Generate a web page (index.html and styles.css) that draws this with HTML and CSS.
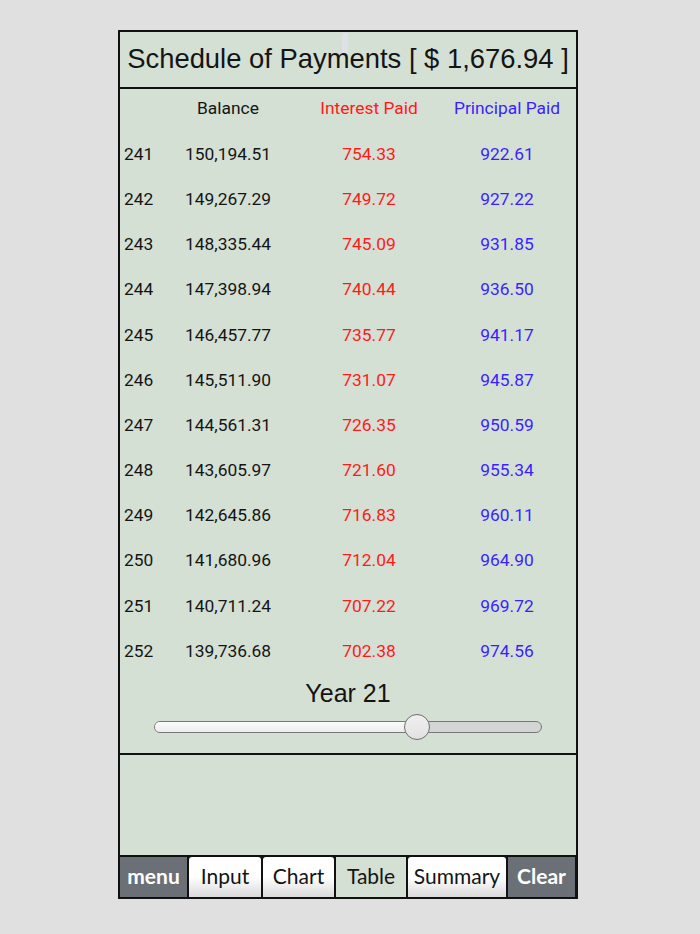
FILE: index.html
```html
<!DOCTYPE html>
<html>
<head>
  <meta charset='utf-8'>
  <title>Schedule of Payments</title>
  <meta name='viewport' content='width=device-width, initial-scale=1'>
  <link rel="stylesheet" href="styles.css">
</head>
<body>

  <div class="panel">
    <div class="title">
      Schedule of Payments [ $ 1,676.94 ]
      <span class="caret"></span>
    </div>

    <div class="schedule">
      <div class="row head">
        <span class="num"></span>
        <span class="bal">Balance</span>
        <span class="int">Interest Paid</span>
        <span class="prin">Principal Paid</span>
      </div>
      <div class="row"><span class="num">241</span><span class="bal">150,194.51</span><span class="int">754.33</span><span class="prin">922.61</span></div>
      <div class="row"><span class="num">242</span><span class="bal">149,267.29</span><span class="int">749.72</span><span class="prin">927.22</span></div>
      <div class="row"><span class="num">243</span><span class="bal">148,335.44</span><span class="int">745.09</span><span class="prin">931.85</span></div>
      <div class="row"><span class="num">244</span><span class="bal">147,398.94</span><span class="int">740.44</span><span class="prin">936.50</span></div>
      <div class="row"><span class="num">245</span><span class="bal">146,457.77</span><span class="int">735.77</span><span class="prin">941.17</span></div>
      <div class="row"><span class="num">246</span><span class="bal">145,511.90</span><span class="int">731.07</span><span class="prin">945.87</span></div>
      <div class="row"><span class="num">247</span><span class="bal">144,561.31</span><span class="int">726.35</span><span class="prin">950.59</span></div>
      <div class="row"><span class="num">248</span><span class="bal">143,605.97</span><span class="int">721.60</span><span class="prin">955.34</span></div>
      <div class="row"><span class="num">249</span><span class="bal">142,645.86</span><span class="int">716.83</span><span class="prin">960.11</span></div>
      <div class="row"><span class="num">250</span><span class="bal">141,680.96</span><span class="int">712.04</span><span class="prin">964.90</span></div>
      <div class="row"><span class="num">251</span><span class="bal">140,711.24</span><span class="int">707.22</span><span class="prin">969.72</span></div>
      <div class="row"><span class="num">252</span><span class="bal">139,736.68</span><span class="int">702.38</span><span class="prin">974.56</span></div>
    </div>

    <div class="year">Year 21</div>
    <div class="slider">
      <div class="track">
        <div class="fill"></div>
        <span class="thumb"></span>
      </div>
    </div>

    <div class="blank"></div>

    <div class="tabs">
      <span class="tab dark w-menu">menu</span>
      <span class="tab w-input">Input</span>
      <span class="tab w-chart">Chart</span>
      <span class="tab active w-table">Table</span>
      <span class="tab w-summary">Summary</span>
      <span class="tab dark w-clear">Clear</span>
    </div>
  </div>

</body>
</html>
```

FILE: styles.css
```css
body {
  margin: 0;
  background: rgb(224, 224, 224);
  font-family: Roboto, "Liberation Sans", sans-serif;
}

.panel {
  margin: 30px 0 0 118px;
  width: 460px;
  background: rgb(212, 224, 212);
  border: 2px solid rgb(17, 17, 17);
  box-sizing: border-box;
}

.title {
  position: relative;
  height: 55px;
  line-height: 53px;
  text-align: center;
  font-family: "Liberation Sans", Arial, sans-serif;
  font-size: 27.4px;
  color: rgb(20, 20, 20);
  border-bottom: 2px solid rgb(17, 17, 17);
}
/* little grey artefact over the "m" */
.caret {
  position: absolute;
  left: 222px;
  top: 1px;
  width: 6px;
  height: 20px;
  background: rgb(222, 225, 232);
}

.row {
  display: grid;
  grid-template-columns: 60px 96px 186px 90px;
  height: 45.17px;
  align-items: center;
  font-size: 17.4px;
  color: rgb(20, 20, 20);
}
.row.head {
  height: 42.4px;
  padding-bottom: 4px;
  box-sizing: border-box;
}
.row .num {
  padding-left: 4px;
}
.row .bal,
.row .int,
.row .prin {
  text-align: center;
  white-space: nowrap;
}
.row .int {
  color: rgb(255, 26, 26);
}
.row .prin {
  margin: 0 -12px;
  color: rgb(59, 31, 255);
}

.year {
  margin-top: 6px;
  text-align: center;
  font-family: "Liberation Sans", Arial, sans-serif;
  font-size: 25px;
  color: rgb(20, 20, 20);
  line-height: 28px;
}

.slider {
  padding: 14px 0 20px 34px;
}
.track {
  position: relative;
  width: 388px;
  height: 12px;
  background: rgb(212, 212, 212);
  border: 1px solid rgb(120, 120, 120);
  border-radius: 6px;
  box-sizing: border-box;
}
.fill {
  width: 262px;
  height: 100%;
  background: linear-gradient(rgb(252, 252, 252), rgb(236, 236, 236));
  border-radius: 6px 0 0 6px;
}
.thumb {
  position: absolute;
  left: 249px;
  top: -8px;
  width: 26px;
  height: 26px;
  box-sizing: border-box;
  border-radius: 50%;
  border: 1px solid rgb(110, 110, 110);
  background: linear-gradient(rgb(240, 240, 240), rgb(226, 226, 226));
}

.blank {
  height: 100px;
  border-top: 2px solid rgb(17, 17, 17);
}

.tabs {
  display: flex;
  gap: 2px;
  height: 42px;
  background: rgb(17, 17, 17);
  border-top: 2px solid rgb(17, 17, 17);
  box-sizing: border-box;
  font-family: Lato, "Open Sans", sans-serif;
  font-size: 21px;
}
.tab {
  display: flex;
  align-items: center;
  justify-content: center;
  padding-bottom: 3px;
  color: rgb(20, 20, 20);
  background: linear-gradient(rgb(255, 255, 255) 50%, rgb(218, 218, 218));
  border-radius: 3px 3px 0 0;
}
.tab.dark {
  background: rgb(107, 112, 119);
  color: rgb(255, 255, 255);
  font-weight: bold;
  border-radius: 0;
}
.tab.active {
  background: rgb(212, 224, 212);
  border-radius: 0;
}
.w-menu { width: 67px; }
.w-input { width: 72px; }
.w-chart { width: 71px; }
.w-table { width: 70px; }
.w-summary { width: 98px; }
.w-clear { width: 67px; }
```
